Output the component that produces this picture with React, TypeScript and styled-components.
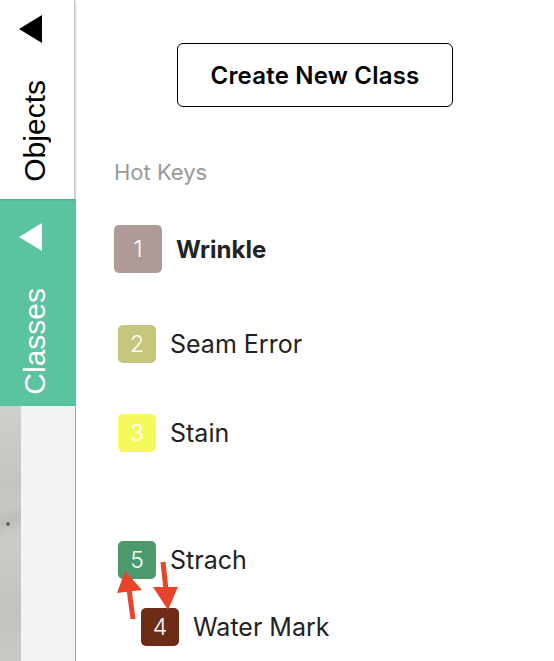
import styled, { createGlobalStyle } from 'styled-components';

const GlobalStyle = createGlobalStyle`
  html, body {
    margin: 0;
    padding: 0;
    background: #ffffff;
  }

  #root {
    height: 100vh;
  }
`;

type HotKey = {
  key: string;
  label: string;
  color: string;
  size: number;
  top: number;
  indent: number;
  bold?: boolean;
};

const HOT_KEYS: HotKey[] = [
  { key: '1', label: 'Wrinkle', color: '#ae9a96', size: 48, top: 0, indent: 0, bold: true },
  { key: '2', label: 'Seam Error', color: '#c5c77b', size: 38, top: 52, indent: 4 },
  { key: '3', label: 'Stain', color: '#f5f95b', size: 38, top: 51, indent: 4 },
];

const DRAGGED: HotKey[] = [
  { key: '5', label: 'Strach', color: '#4a9a6b', size: 38, top: 0, indent: 4 },
  { key: '4', label: 'Water Mark', color: '#6d2c16', size: 38, top: 29, indent: 27 },
];

function TriangleIcon({ color }: { color: string }) {
  return (
    <svg width='23' height='28' viewBox='0 0 23 28'>
      <polygon points='0,14 23,0 23,28' fill={color} />
    </svg>
  );
}

function Arrows() {
  return (
    <ArrowLayer width='80' height='90' viewBox='0 0 80 90'>
      <line x1='19' y1='78' x2='15' y2='48' stroke='#e8442a' strokeWidth='5' />
      <polygon points='11,30 3,52 28,49' fill='#e8442a' />
      <line x1='49' y1='21' x2='52' y2='49' stroke='#e8442a' strokeWidth='5' />
      <polygon points='54,69 39,46 64,46' fill='#e8442a' />
    </ArrowLayer>
  );
}

function KeyRow({ item }: { item: HotKey }) {
  return (
    <Row $top={item.top} $indent={item.indent}>
      <Swatch $color={item.color} $size={item.size}>
        {item.key}
      </Swatch>
      <Label $bold={item.bold}>{item.label}</Label>
    </Row>
  );
}

export default function App() {
  return (
    <>
      <GlobalStyle />
      <Layout>
        <Sidebar>
          <ObjectsTab>
            <TriangleIcon color='#000000' />
            <TabText>Objects</TabText>
          </ObjectsTab>
          <ClassesTab>
            <TriangleIcon color='#ffffff' />
            <TabText>Classes</TabText>
          </ClassesTab>
          <SidebarRest>
            <ImageStrip />
            <EmptyArea />
          </SidebarRest>
        </Sidebar>

        <Panel>
          <CreateButton type='button'>Create New Class</CreateButton>
          <SectionTitle>Hot Keys</SectionTitle>
          <KeyList>
            {HOT_KEYS.map((item) => (
              <KeyRow key={item.key} item={item} />
            ))}
          </KeyList>
          <DragGroup>
            {DRAGGED.map((item) => (
              <KeyRow key={item.key} item={item} />
            ))}
            <Arrows />
          </DragGroup>
        </Panel>
      </Layout>
    </>
  );
}

const Layout = styled.div`
  display: flex;
  height: 100%;
  overflow: hidden;
`;

const Sidebar = styled.aside`
  display: flex;
  flex-direction: column;
  width: 76px;
  flex-shrink: 0;
`;

const Tab = styled.div<{ $padTop: number }>`
  display: flex;
  flex-direction: column;
  align-items: flex-start;
  gap: 37px;
  box-sizing: border-box;
  padding: ${({ $padTop }) => $padTop}px 0 0 19px;

  svg {
    display: block;
  }
`;

const ObjectsTab = styled(Tab).attrs({ $padTop: 15 })`
  width: 75px;
  height: 199px;
  background: #ffffff;
  border-right: 1px solid #c9c9c9;
  box-shadow: 1px 1px 2px rgb(0 0 0 / 18%);
  color: #000000;
  position: relative;
  z-index: 1;
`;

const ClassesTab = styled(Tab).attrs({ $padTop: 24 })`
  width: 76px;
  height: 207px;
  background: #5bc3a0;
  color: #ffffff;
`;

const TabText = styled.span`
  writing-mode: vertical-rl;
  transform: rotate(180deg);
  font-family: 'Liberation Sans', Arial, sans-serif;
  font-size: 30px;
  line-height: 30px;
  margin-left: 1px;
`;

const SidebarRest = styled.div`
  flex: 1;
  display: flex;
  border-right: 1px solid #5bc3a0;
`;

const ImageStrip = styled.div`
  width: 21px;
  background:
    radial-gradient(circle at 8px 118px, #5e5e5c 0 1.5px, transparent 2px),
    linear-gradient(160deg, transparent 40%, rgb(0 0 0 / 6%) 45%, transparent 50%),
    linear-gradient(175deg, #cfd0cc 0%, #c4c5c1 30%, #cbccc8 55%, #c2c3bf 80%, #c9cac6 100%);
`;

const EmptyArea = styled.div`
  flex: 1;
  background: #f3f3f3;
`;

const Panel = styled.main`
  flex: 1;
  display: flex;
  flex-direction: column;
  align-items: flex-start;
  padding: 43px 0 0 38px;
  font-family: Inter, 'Noto Sans', sans-serif;
  color: #1f1f1f;
`;

const CreateButton = styled.button`
  align-self: center;
  margin-left: -38px;
  width: 276px;
  height: 64px;
  border: 1px solid #000000;
  border-radius: 6px;
  background: #ffffff;
  font-family: Inter, 'Noto Sans', sans-serif;
  font-size: 24px;
  font-weight: 600;
  color: #000000;
  letter-spacing: 0.2px;
`;

const SectionTitle = styled.div`
  margin-top: 52px;
  font-size: 22px;
  line-height: 26px;
  color: #999999;
`;

const KeyList = styled.div`
  display: flex;
  flex-direction: column;
  margin-top: 40px;
`;

const Row = styled.div<{ $top: number; $indent: number }>`
  display: flex;
  align-items: center;
  gap: 14px;
  margin-top: ${({ $top }) => $top}px;
  padding-left: ${({ $indent }) => $indent}px;
`;

const Swatch = styled.div<{ $color: string; $size: number }>`
  display: flex;
  align-items: center;
  justify-content: center;
  width: ${({ $size }) => $size}px;
  height: ${({ $size }) => $size}px;
  border-radius: 5px;
  background: ${({ $color }) => $color};
  color: #ffffff;
  font-size: 23px;
  font-weight: 300;
`;

const Label = styled.span<{ $bold?: boolean }>`
  font-size: ${({ $bold }) => ($bold ? 24 : 25)}px;
  font-weight: ${({ $bold }) => ($bold ? 700 : 400)};
  color: #222222;
`;

const DragGroup = styled.div`
  position: relative;
  display: flex;
  flex-direction: column;
  margin-top: 89px;
`;

const ArrowLayer = styled.svg`
  position: absolute;
  left: 0;
  top: 0;
  overflow: visible;
`;
